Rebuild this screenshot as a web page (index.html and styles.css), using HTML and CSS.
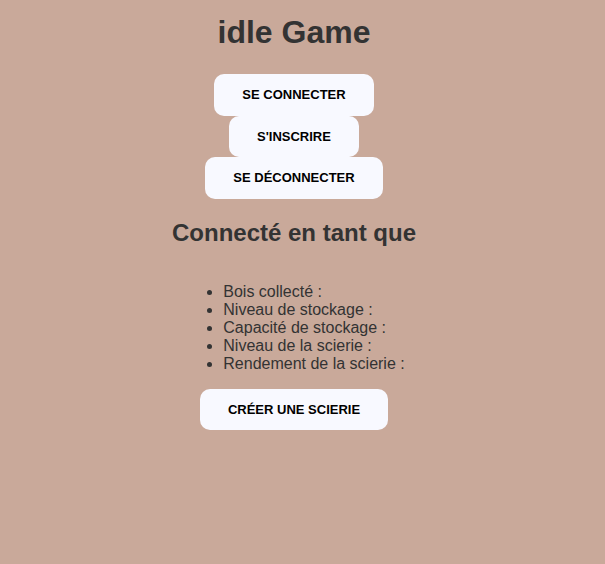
FILE: index.html
```html
<!DOCTYPE html>
<html lang="fr">
<head>
<meta charset="utf-8">
<title>idle Game</title>
<link rel="stylesheet" href="styles.css">
</head>
<body>
<main class="app">
  <h1 class="title">idle Game</h1>
  <div class="auth">
    <button class="btn">SE CONNECTER</button>
    <button class="btn">S'INSCRIRE</button>
    <button class="btn">SE DÉCONNECTER</button>
  </div>
  <h2 class="subtitle">Connecté en tant que</h2>
  <ul class="stats">
    <li>Bois collecté :</li>
    <li>Niveau de stockage :</li>
    <li>Capacité de stockage :</li>
    <li>Niveau de la scierie :</li>
    <li>Rendement de la scierie :</li>
  </ul>
  <div class="actions">
    <button class="btn">CRÉER UNE SCIERIE</button>
  </div>
</main>
</body>
</html>
```
FILE: styles.css
```css
html, body {
  margin: 0;
  padding: 0;
  background: #c9a99a;
}
body {
  font-family: "Liberation Sans", Arial, sans-serif;
  color: #333333;
  min-height: 564px;
}
.app {
  width: 572px;
  margin: 0 8px;
  text-align: center;
  padding-top: 14px;
}
.title {
  font-size: 32px;
  font-weight: bold;
  margin: 0 0 23px;
  line-height: 37px;
}
.auth {
  display: flex;
  flex-direction: column;
  align-items: center;
}
.btn {
  font-family: "Liberation Sans", Arial, sans-serif;
  font-size: 13px;
  font-weight: bold;
  color: #000;
  background: #f8f9ff;
  border: none;
  border-radius: 10px;
  padding: 13px 28px;
  line-height: 15.5px;
}
.subtitle {
  font-size: 24px;
  font-weight: bold;
  margin: 20px 0 0;
  line-height: 28px;
}
.stats {
  display: inline-block;
  text-align: left;
  margin: 36px 0 0;
  padding-left: 40px;
  font-size: 16px;
  line-height: 18px;
}
.actions {
  margin-top: 16px;
  display: flex;
  justify-content: center;
}
```
